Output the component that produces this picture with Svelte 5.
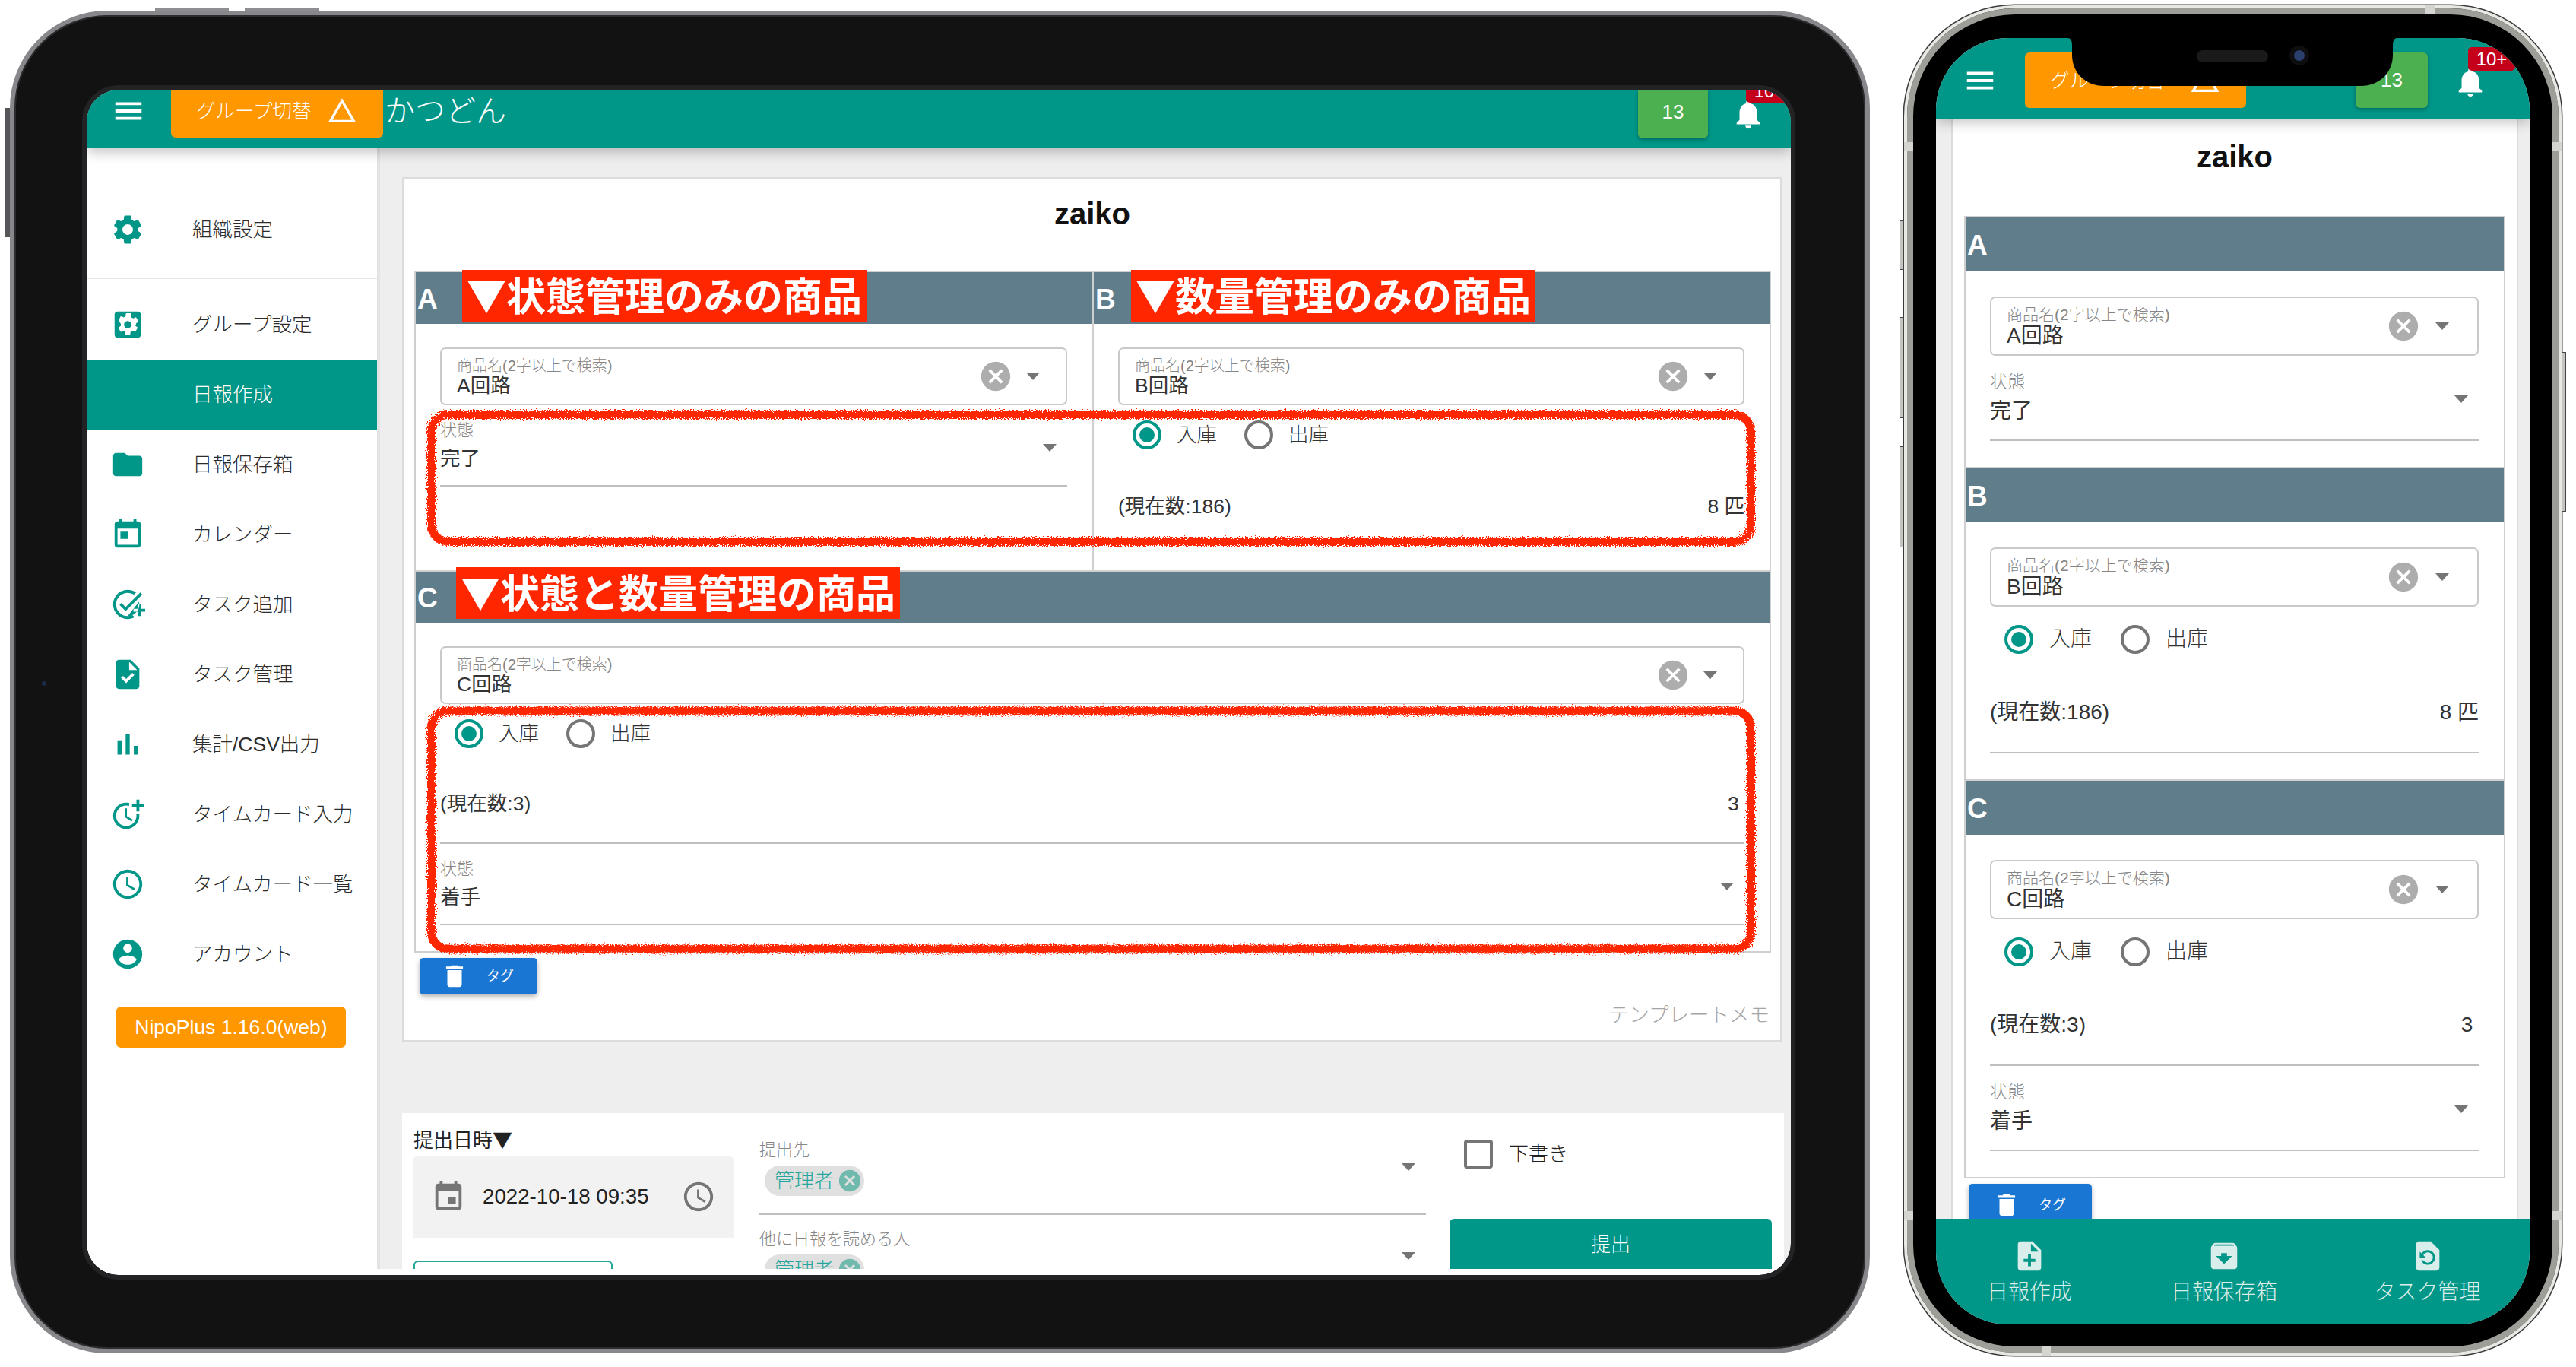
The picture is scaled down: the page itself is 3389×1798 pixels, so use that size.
<script>
  const icons = {
    menu: "M3 18h18v-2H3v2zm0-5h18v-2H3v2zm0-7v2h18V6H3z",
    warn: "M12 5.99L19.53 19H4.47L12 5.99M12 2L1 21h22L12 2z",
    bell: "M12 22c1.1 0 2-.9 2-2h-4c0 1.1.89 2 2 2zm6-6v-5c0-3.07-1.64-5.64-4.5-6.32V4c0-.83-.67-1.5-1.5-1.5s-1.5.67-1.5 1.5v.68C7.63 5.36 6 7.92 6 11v5l-2 2v1h16v-1l-2-2z",
    settings: "M19.14 12.94c.04-.3.06-.61.06-.94 0-.32-.02-.64-.07-.94l2.03-1.58c.18-.14.23-.41.12-.61l-1.92-3.32c-.12-.22-.37-.29-.59-.22l-2.39.96c-.5-.38-1.03-.7-1.62-.94l-.36-2.54c-.04-.24-.24-.41-.48-.41h-3.84c-.24 0-.43.17-.47.41l-.36 2.54c-.59.24-1.13.57-1.62.94l-2.39-.96c-.22-.08-.47 0-.59.22L2.74 8.87c-.12.21-.08.47.12.61l2.03 1.58c-.05.3-.09.63-.09.94s.02.64.07.94l-2.03 1.58c-.18.14-.23.41-.12.61l1.92 3.32c.12.22.37.29.59.22l2.39-.96c.5.38 1.03.7 1.62.94l.36 2.54c.05.24.24.41.48.41h3.84c.24 0 .44-.17.47-.41l.36-2.54c.59-.24 1.13-.56 1.62-.94l2.39.96c.22.08.47 0 .59-.22l1.92-3.32c.12-.22.07-.47-.12-.61l-2.01-1.58zM12 15.6c-1.98 0-3.6-1.62-3.6-3.6s1.62-3.6 3.6-3.6 3.6 1.62 3.6 3.6-1.62 3.6-3.6 3.6z",
    groupSettings: "M19 3H5c-1.1 0-2 .9-2 2v14c0 1.1.9 2 2 2h14c1.1 0 2-.9 2-2V5c0-1.1-.9-2-2-2zm-1.75 9c0 .23-.02.46-.05.68l1.48 1.16c.13.11.17.3.08.45l-1.4 2.42c-.09.15-.27.21-.43.15l-1.74-.7c-.36.28-.76.51-1.18.69l-.26 1.85c-.03.17-.18.3-.35.3h-2.8c-.17 0-.32-.13-.35-.3L10.5 17c-.43-.18-.82-.41-1.18-.69l-1.74.7c-.16.06-.34 0-.43-.15l-1.4-2.42c-.09-.15-.05-.34.08-.45l1.48-1.16c-.03-.22-.05-.45-.05-.68 0-.23.02-.46.05-.68L5.83 9.31c-.13-.11-.17-.3-.08-.45l1.4-2.42c.09-.15.27-.21.43-.15l1.74.7c.36-.28.76-.51 1.18-.69l.26-1.85c.03-.17.18-.3.35-.3h2.8c.17 0 .32.13.35.3L14.5 7c.43.18.82.41 1.18.69l1.74-.7c.16-.06.34 0 .43.15l1.4 2.42c.09.15.05.34-.08.45l-1.48 1.16c.03.22.05.45.05.68zM12 9.5c-1.38 0-2.5 1.12-2.5 2.5s1.12 2.5 2.5 2.5 2.5-1.12 2.5-2.5-1.12-2.5-2.5-2.5z",
    folder: "M10 4H4c-1.1 0-1.99.9-1.99 2L2 18c0 1.1.9 2 2 2h16c1.1 0 2-.9 2-2V8c0-1.1-.9-2-2-2h-8l-2-2z",
    today: "M19 3h-1V1h-2v2H8V1H6v2H5c-1.11 0-1.99.9-1.99 2L3 19c0 1.1.89 2 2 2h14c1.1 0 2-.9 2-2V5c0-1.1-.9-2-2-2zm0 16H5V8h14v11zM7 10h5v5H7z",
    event: "M17 12h-5v5h5v-5zM16 1v2H8V1H6v2H5c-1.11 0-1.99.9-1.99 2L3 19c0 1.1.89 2 2 2h14c1.1 0 2-.9 2-2V5c0-1.1-.9-2-2-2h-1V1h-2zm3 18H5V8h14v11z",
    addTask: "M22 5.18L10.59 16.6l-4.24-4.24 1.41-1.41 2.83 2.83 10-10L22 5.18zM19.79 10.22c.13.57.21 1.17.21 1.78 0 4.42-3.58 8-8 8s-8-3.58-8-8 3.58-8 8-8c1.58 0 3.04.46 4.28 1.25l1.44-1.44C16.1 2.67 14.13 2 12 2 6.48 2 2 6.48 2 12s4.48 10 10 10c1.73 0 3.36-.44 4.78-1.22l-1.5-1.5c-1 .46-2.11.72-3.28.72zM19 15h-3v2h3v3h2v-3h3v-2h-3v-3h-2v3z",
    task: "M14 2H6c-1.1 0-1.99.9-1.99 2L4 20c0 1.1.89 2 1.99 2H18c1.1 0 2-.9 2-2V8l-6-6zm-3.06 16L7.4 14.46l1.41-1.41 2.12 2.12 4.24-4.24 1.41 1.41L10.94 18zM13 9V3.5L18.5 9H13z",
    chart: "M5 9.2h3V19H5zM10.6 5h2.8v14h-2.8zm5.6 8H19v6h-2.8z",
    moreTime: "M10 8v6l4.7 2.9.8-1.2-4-2.4V8zM17.92 12c.05.33.08.66.08 1 0 3.9-3.1 7-7 7s-7-3.1-7-7 3.1-7 7-7c.7 0 1.37.1 2 .29V4.23C12.36 4.08 11.69 4 11 4c-5 0-9 4-9 9s4 9 9 9 9-4 9-9c0-.34-.02-.67-.06-1h-2.02zM20 5V2h-2v3h-3v2h3v3h2V7h3V5h-3z",
    clock: "M11.99 2C6.47 2 2 6.48 2 12s4.47 10 9.99 10C17.52 22 22 17.52 22 12S17.52 2 11.99 2zM12 20c-4.42 0-8-3.58-8-8s3.58-8 8-8 8 3.58 8 8-3.58 8-8 8zm.5-13H11v6l5.25 3.15.75-1.23-4.5-2.67z",
    account: "M12 2C6.48 2 2 6.48 2 12s4.48 10 10 10 10-4.48 10-10S17.52 2 12 2zm0 3c1.66 0 3 1.34 3 3s-1.34 3-3 3-3-1.34-3-3 1.34-3 3-3zm0 14.2c-2.5 0-4.71-1.28-6-3.22.03-1.99 4-3.08 6-3.08 1.99 0 5.97 1.09 6 3.08-1.29 1.94-3.5 3.22-6 3.22z",
    trash: "M6 19c0 1.1.9 2 2 2h8c1.1 0 2-.9 2-2V7H6v12zM19 4h-3.5l-1-1h-5l-1 1H5v2h14V4z",
    cancel: "M12 2C6.47 2 2 6.47 2 12s4.47 10 10 10 10-4.47 10-10S17.53 2 12 2zm5 13.59L15.59 17 12 13.41 8.41 17 7 15.59 10.59 12 7 8.41 8.41 7 12 10.59 15.59 7 17 8.41 13.41 12 17 15.59z",
    noteAdd: "M14 2H6c-1.1 0-1.99.9-1.99 2L4 20c0 1.1.89 2 1.99 2H18c1.1 0 2-.9 2-2V8l-6-6zm2 14h-3v3h-2v-3H8v-2h3v-3h2v3h3v2zm-3-7V3.5L18.5 9H13z",
    archive: "M20.54 5.23l-1.39-1.68C18.88 3.21 18.47 3 18 3H6c-.47 0-.88.21-1.16.55L3.46 5.23C3.17 5.57 3 6.02 3 6.5V19c0 1.1.9 2 2 2h14c1.1 0 2-.9 2-2V6.5c0-.48-.17-.93-.46-1.27zM12 17.5L6.5 12H10v-2h4v2h3.5L12 17.5zM5.12 5l.81-1h12l.94 1H5.12z",
    restore: "M14 2H6c-1.1 0-1.99.9-1.99 2L4 20c0 1.1.89 2 1.99 2H18c1.1 0 2-.9 2-2V8l-6-6zm-2 16c-2.05 0-3.81-1.24-4.58-3h1.71c.63.9 1.68 1.5 2.87 1.5 1.93 0 3.5-1.57 3.5-3.5S13.93 9.5 12 9.5c-1.35 0-2.52.78-3.1 1.9l1.6 1.6h-4V9l1.3 1.3C8.69 8.92 10.23 8 12 8c2.76 0 5 2.24 5 5s-2.24 5-5 5z"
  };

  const menuItems = [
    { icon: "folder", label: "日報保存箱" },
    { icon: "today", label: "カレンダー" },
    { icon: "addTask", label: "タスク追加" },
    { icon: "task", label: "タスク管理" },
    { icon: "chart", label: "集計/CSV出力" },
    { icon: "moreTime", label: "タイムカード入力" },
    { icon: "clock", label: "タイムカード一覧" },
    { icon: "account", label: "アカウント" }
  ];

  const bottomNav = [
    { icon: "noteAdd", label: "日報作成" },
    { icon: "archive", label: "日報保存箱" },
    { icon: "restore", label: "タスク管理" }
  ];
</script>

{#snippet icon(name, cls)}
  <svg class="icon {cls}" viewBox="0 0 24 24"><path d={icons[name]} /></svg>
{/snippet}

{#snippet topbar()}
  <header class="topbar">
    {@render icon("menu", "burger")}
    <div class="group-btn">
      <span>グループ切替</span>
      {@render icon("warn", "warn")}
    </div>
    <div class="org">かつどん</div>
    <div class="count">13</div>
    <div class="bell">
      {@render icon("bell", "bell-icon")}
      <span class="badge">10+</span>
    </div>
  </header>
{/snippet}

{#snippet arrow()}
  <i class="arrow"></i>
{/snippet}

{#snippet product(value)}
  <div class="product">
    <div class="product-text">
      <div class="label">商品名(2字以上で検索)</div>
      <div class="value">{value}</div>
    </div>
    {@render icon("cancel", "clear")}
    {@render arrow()}
  </div>
{/snippet}

{#snippet status(value)}
  <div class="status">
    <div>
      <div class="label">状態</div>
      <div class="value">{value}</div>
    </div>
    {@render arrow()}
  </div>
{/snippet}

{#snippet stock(current, amount, cls)}
  <div class="radios">
    <span class="radio on"><b></b></span><span class="radio-text">入庫</span>
    <span class="radio"></span><span class="radio-text">出庫</span>
  </div>
  <div class="qty {cls}">
    <span>(現在数:{current})</span>
    <span>{amount}</span>
  </div>
{/snippet}

{#snippet sectionHead(letter, note, cls)}
  <div class="sec-head {cls}">
    {letter}
    {#if note}<span class="note">{note}</span>{/if}
  </div>
{/snippet}

{#snippet tagBtn()}
  <div class="tag-btn">
    {@render icon("trash", "trash")}
    <span>タグ</span>
  </div>
{/snippet}

<div class="page">
  <!-- tablet -->
  <div class="tablet">
    <span class="hw top-a"></span>
    <span class="hw top-b"></span>
    <span class="hw side-a"></span>
    <span class="lens"></span>
    <div class="screen">
      {@render topbar()}
      <div class="body">
        <aside class="sidebar">
          <div class="nav first">{@render icon("settings", "nav-icon")}<span>組織設定</span></div>
          <div class="nav second">{@render icon("groupSettings", "nav-icon")}<span>グループ設定</span></div>
          <div class="nav active"><span>日報作成</span></div>
          {#each menuItems as item}
            <div class="nav">{@render icon(item.icon, "nav-icon")}<span>{item.label}</span></div>
          {/each}
          <div class="version">NipoPlus 1.16.0(web)</div>
        </aside>

        <main class="main">
          <div class="card">
            <h1 class="title">zaiko</h1>
            <div class="sections">
              <div class="row-top">
                <section class="sec">
                  {@render sectionHead("A", "▼状態管理のみの商品", "a")}
                  <div class="fields">
                    {@render product("A回路")}
                    {@render status("完了")}
                  </div>
                </section>
                <section class="sec sec-b">
                  {@render sectionHead("B", "▼数量管理のみの商品", "b")}
                  <div class="fields">
                    {@render product("B回路")}
                    {@render stock(186, "8 匹", "bare")}
                  </div>
                </section>
              </div>
              <section class="sec sec-c">
                {@render sectionHead("C", "▼状態と数量管理の商品", "c")}
                <div class="fields">
                  {@render product("C回路")}
                  {@render stock(3, "3\u00a0", "")}
                  {@render status("着手")}
                </div>
              </section>
            </div>
            {@render tagBtn()}
            <div class="memo">テンプレートメモ</div>
          </div>

          <div class="foot">
            <div class="foot-date">
              <div class="foot-title">提出日時▼</div>
              <div class="date-box">
                {@render icon("event", "date-icon")}
                <span class="date-text">2022-10-18 09:35</span>
                {@render icon("clock", "date-icon")}
              </div>
              <div class="outline-btn"></div>
            </div>
            <div class="foot-people">
              <div class="people first-people">
                <div>
                  <div class="people-label">提出先</div>
                  <span class="chip">管理者{@render icon("cancel", "chip-x")}</span>
                </div>
                {@render arrow()}
              </div>
              <div class="people">
                <div>
                  <div class="people-label">他に日報を読める人</div>
                  <span class="chip">管理者{@render icon("cancel", "chip-x")}</span>
                </div>
                {@render arrow()}
              </div>
            </div>
            <div class="foot-submit">
              <div class="draft"><i class="checkbox"></i><span>下書き</span></div>
              <div class="submit">提出</div>
            </div>
          </div>
        </main>
      </div>
      <div class="safe-strip"></div>

      <svg class="scribble" width="2242" height="1559" viewBox="0 0 2242 1559">
        <defs>
          <filter id="rough" x="-2%" y="-8%" width="104%" height="116%">
            <feTurbulence type="fractalNoise" baseFrequency="0.7" numOctaves="3" seed="4" result="n" />
            <feDisplacementMap in="SourceGraphic" in2="n" scale="10" />
          </filter>
        </defs>
        <rect x="453.5" y="427.5" width="1736" height="167" rx="22" filter="url(#rough)" />
        <rect x="453.5" y="817" width="1736" height="313" rx="22" filter="url(#rough)" />
      </svg>
    </div>
  </div>

  <!-- phone -->
  <div class="phone">
    <span class="hw p-btn p-left-a"></span>
    <span class="hw p-btn p-left-b"></span>
    <span class="hw p-btn p-left-c"></span>
    <span class="hw p-btn p-right-a"></span>
    <span class="band b1"></span>
    <span class="band b2"></span>
    <span class="band b3"></span>
    <span class="band b4"></span>
    <span class="band b5"></span>
    <span class="band b6"></span>
    <div class="screen">
      {@render topbar()}
      <div class="body">
        <main class="main">
          <div class="card">
            <h1 class="title">zaiko</h1>
            <div class="sections">
              <div class="row-top">
                <section class="sec">
                  {@render sectionHead("A", "", "")}
                  <div class="fields">
                    {@render product("A回路")}
                    {@render status("完了")}
                  </div>
                </section>
                <section class="sec sec-b">
                  {@render sectionHead("B", "", "")}
                  <div class="fields">
                    {@render product("B回路")}
                    {@render stock(186, "8 匹", "")}
                  </div>
                </section>
              </div>
              <section class="sec sec-c">
                {@render sectionHead("C", "", "")}
                <div class="fields">
                  {@render product("C回路")}
                  {@render stock(3, "3\u00a0", "")}
                  {@render status("着手")}
                </div>
              </section>
            </div>
            {@render tagBtn()}
          </div>
        </main>
      </div>
      <nav class="bottom-nav">
        {#each bottomNav as item}
          <div class="bn-item">
            {@render icon(item.icon, "bn-icon")}
            <span>{item.label}</span>
          </div>
        {/each}
      </nav>
      <svg class="notch" width="434" height="64" viewBox="0 0 434 64">
        <path d="M0 0H434Q428 0 428 9V22C428 46 410 63 386 63H48C24 63 6 46 6 22V9Q6 0 0 0Z" />
        <rect x="170" y="16" width="94" height="16" rx="8" fill="#1a1a1a" />
        <circle cx="305" cy="23" r="13" fill="#0e0e10" />
        <circle cx="305" cy="23" r="7" fill="#2a3f6b" />
      </svg>
    </div>
  </div>
</div>

<style>
  :global(body) {
    margin: 0;
    background: #fff;
    overflow: hidden;
  }

  .page {
    width: 3389px;
    height: 1798px;
    display: flex;
    align-items: flex-start;
    font-family: "Liberation Sans", "Noto Sans CJK JP", sans-serif;
    color: #333;
    font-size: 26px;
    line-height: 36px;
    background: #fff;
    overflow: hidden;
  }

  .icon {
    width: 46px;
    height: 46px;
    flex: none;
    fill: currentColor;
    display: block;
  }

  /* device frames */
  .tablet {
    position: relative;
    box-sizing: border-box;
    width: 2447px;
    height: 1766px;
    margin: 14px 0 0 13px;
    padding: 98px 0 0 95px;
    background: #121212;
    border: 6px solid #87878c;
    border-radius: 128px;
    box-shadow: inset 0 0 0 2px #2c2c2e;
  }

  .hw {
    position: absolute;
    background: #8e8e92;
  }
  .top-a {
    left: 185px;
    top: -10px;
    width: 97px;
    height: 4px;
  }
  .top-b {
    left: 303px;
    top: -10px;
    width: 98px;
    height: 4px;
  }
  .side-a {
    left: -12px;
    top: 122px;
    width: 6px;
    height: 170px;
    background: #55555a;
  }
  .lens {
    position: absolute;
    left: 36px;
    top: 876px;
    width: 6px;
    height: 6px;
    border-radius: 50%;
    background: #1c2a4a;
  }

  .phone {
    position: relative;
    box-sizing: border-box;
    width: 865px;
    height: 1776px;
    margin: 7px 0 0 45px;
    padding: 39px 0 0 38px;
    background: #000;
    border: 4px solid #e8e8e4;
    border-radius: 146px;
    box-shadow:
      0 0 0 1.5px #3a3a3a,
      inset 0 0 0 8px #9d9e98;
  }
  .p-btn {
    width: 6px;
    box-sizing: border-box;
    background: #c4c4c0;
    border: 1.5px solid #444;
  }
  .p-left-a {
    left: -10px;
    top: 279px;
    height: 65px;
  }
  .p-left-b {
    left: -10px;
    top: 406px;
    height: 133px;
  }
  .p-left-c {
    left: -10px;
    top: 576px;
    height: 133px;
  }
  .p-right-a {
    right: -10px;
    top: 452px;
    height: 210px;
  }
  .band {
    position: absolute;
    background: #d4d4d0;
  }
  .b1,
  .b2 {
    top: 176px;
    width: 12px;
    height: 12px;
  }
  .b3,
  .b4 {
    top: 1582px;
    width: 12px;
    height: 12px;
  }
  .b1,
  .b3 {
    left: -4px;
  }
  .b2,
  .b4 {
    right: -4px;
  }
  .b5,
  .b6 {
    width: 12px;
    height: 12px;
  }
  .b5 {
    left: 682px;
    top: -4px;
  }
  .b6 {
    left: 177px;
    bottom: -4px;
  }

  /* screens */
  .screen {
    position: relative;
    display: flex;
    flex-direction: column;
    background: #fff;
    overflow: hidden;
  }
  .tablet .screen {
    width: 2242px;
    height: 1559px;
    border-radius: 42px;
    outline: 6px solid #232325;
  }
  .phone .screen {
    width: 781px;
    height: 1692px;
    border-radius: 95px;
  }

  /* top bar */
  .topbar {
    position: relative;
    z-index: 2;
    flex: none;
    display: flex;
    align-items: flex-start;
    background: #009688;
    color: #fff;
    box-shadow: 0 5px 16px rgba(0, 0, 0, 0.24);
  }
  .tablet .topbar {
    height: 77px;
    padding: 0 33px 0 32px;
  }
  .phone .topbar {
    height: 106px;
    padding: 0 55px 0 35px;
  }
  .burger {
    margin-top: 5px;
  }
  .phone .burger {
    margin-top: 33px;
  }
  .group-btn {
    flex: none;
    box-sizing: border-box;
    display: flex;
    align-items: center;
    justify-content: space-between;
    background: #ff9800;
    border-radius: 0 0 6px 6px;
    font-size: 25.5px;
    font-weight: 300;
  }
  .tablet .group-btn {
    width: 279px;
    height: 63px;
    margin-left: 33px;
    padding: 0 34px 7px 33px;
  }
  .phone .group-btn {
    width: 291px;
    height: 73px;
    margin: 19px 0 0 36px;
    padding: 0 34px 0 33px;
    border-radius: 6px;
  }
  .warn {
    width: 40px;
    height: 40px;
  }
  .org {
    flex: 1;
    min-width: 0;
    margin-left: 2px;
    font-size: 40px;
    font-weight: 300;
    line-height: 48px;
    padding-top: 4px;
    white-space: nowrap;
  }
  .phone .org {
    padding-top: 22px;
  }
  .count {
    flex: none;
    width: 92px;
    height: 64px;
    border-radius: 0 0 6px 6px;
    background: #4caf50;
    text-align: center;
    line-height: 58px;
    box-shadow: 0 2px 5px rgba(0, 0, 0, 0.3);
  }
  .phone .count {
    width: 95px;
    height: 73px;
    margin-top: 19px;
    border-radius: 6px;
    line-height: 73px;
  }
  .bell {
    position: relative;
    flex: none;
    margin: 9px 0 0 30px;
    width: 46px;
  }
  .phone .bell {
    margin: 35px 0 0 33px;
  }
  .badge {
    position: absolute;
    left: 20px;
    top: -23px;
    box-sizing: border-box;
    width: 62px;
    height: 31px;
    border-radius: 5px;
    background: #c4001a;
    font-size: 24px;
    line-height: 31px;
    text-align: center;
  }

  .body {
    flex: 1;
    min-height: 0;
    display: flex;
    overflow: hidden;
    background: #eee;
  }
  .safe-strip {
    flex: none;
    height: 8px;
    background: #fff;
  }

  /* sidebar */
  .sidebar {
    flex: none;
    width: 382px;
    background: #fff;
    border-right: 4px solid #e3e3e3;
    padding-top: 61px;
  }
  .nav {
    height: 92px;
    display: flex;
    align-items: center;
    padding-left: 31px;
    color: #2c2c2c;
    font-size: 26.5px;
    font-weight: 300;
  }
  .nav span {
    margin-left: 62px;
    white-space: nowrap;
  }
  .nav-icon {
    color: #009688;
  }
  .first {
    margin-bottom: 17px;
  }
  .second {
    box-sizing: content-box;
    border-top: 2px solid #e4e4e4;
    padding-top: 14px;
  }
  .active {
    background: #009688;
    padding-left: 139px;
    color: #fff;
  }
  .active span {
    margin-left: 0;
  }
  .version {
    width: 302px;
    height: 54px;
    margin: 23px 0 0 39px;
    background: #ff9800;
    border-radius: 6px;
    color: #fff;
    font-size: 26.5px;
    line-height: 54px;
    text-align: center;
  }

  /* main column */
  .main {
    flex: 1;
    min-width: 0;
    box-sizing: border-box;
  }
  .tablet .main {
    padding: 38px 0 0 29px;
  }
  .card {
    box-sizing: border-box;
    background: #fff;
    border: 3px solid #dcdcdc;
  }
  .tablet .card {
    width: 1816px;
    height: 1138px;
    padding: 0 0 0 13px;
  }
  .phone .card {
    width: 746px;
    margin-left: 20px;
    padding: 0 15px;
    border-width: 0 2px;
    height: 1500px;
  }
  .title {
    margin: 0;
    font-size: 40px;
    font-weight: 700;
    color: #111;
    text-align: center;
    line-height: 40px;
  }
  .tablet .title {
    padding: 25px 13px 55px 0;
  }
  .phone .title {
    padding: 30px 0 58px;
  }

  .sections {
    border: 2px solid #cfcfcf;
  }
  .tablet .sections {
    width: 1781px;
  }
  .tablet .row-top {
    display: grid;
    grid-template-columns: 890px 891px;
    height: 392px;
  }
  .tablet .sec-b {
    border-left: 2px solid #cfcfcf;
  }
  .sec-c {
    border-top: 2px solid #cfcfcf;
  }
  .phone .sec-b {
    border-top: 2px solid #cfcfcf;
  }

  .sec-head {
    position: relative;
    background: #607d8b;
    color: #fff;
    font-size: 37px;
    font-weight: 700;
    display: flex;
    align-items: center;
    padding: 3px 0 0 2px;
    box-sizing: border-box;
  }
  .tablet .sec-head {
    height: 68px;
  }
  .tablet .sec-head.c {
    height: 67px;
  }
  .phone .sec-head {
    height: 71px;
  }
  .note {
    position: absolute;
    top: -3px;
    height: 68px;
    padding: 0 6px;
    background: #ff2600;
    font-family: "Noto Sans CJK JP", sans-serif;
    font-size: 52px;
    line-height: 63px;
    white-space: nowrap;
  }
  .sec-head.a .note {
    left: 61px;
  }
  .sec-head.b .note {
    left: 49px;
  }
  .sec-head.c .note {
    top: -6px;
    left: 53px;
  }

  .fields {
    padding: 0 33px 34px 32px;
    font-size: 26.5px;
  }
  .phone .fields {
    font-size: 28px;
  }

  /* product autocomplete */
  .product {
    box-sizing: border-box;
    display: flex;
    align-items: center;
    margin-top: 33px;
    height: 78px;
    padding: 0 37px 0 20px;
    border: 2px solid #c9c9c9;
    border-radius: 7px;
  }
  .tablet .product {
    margin-top: 31px;
    height: 76px;
    padding-right: 34px;
  }
  .product-text {
    flex: 1;
    min-width: 0;
  }
  .label {
    font-size: 22px;
    line-height: 24px;
    color: #868686;
    font-weight: 300;
  }
  .phone .label {
    font-size: 23px;
  }
  .product .label {
    font-size: 20px;
  }
  .phone .product .label {
    font-size: 21px;
  }
  .value {
    font-size: inherit;
    line-height: 36px;
    color: #333;
  }
  .product .value {
    line-height: 28px;
  }
  .phone .product .value {
    margin-top: 2px;
  }
  .clear {
    color: #adadad;
    margin-right: 17px;
  }
  .phone .clear {
    margin-right: 19px;
  }
  .arrow {
    display: block;
    flex: none;
    width: 0;
    height: 0;
    border-left: 9px solid transparent;
    border-right: 9px solid transparent;
    border-top: 10px solid #757575;
  }

  /* status select */
  .status {
    box-sizing: border-box;
    display: flex;
    justify-content: space-between;
    height: 112px;
    padding-top: 22px;
    border-bottom: 2px solid #c0c0c0;
  }
  .tablet .status {
    height: 107px;
    padding-top: 21px;
  }
  .status .value {
    margin-top: 9px;
  }
  .tablet .status .value {
    margin-top: 7px;
  }
  .status .arrow {
    margin: 30px 14px 0 0;
  }

  /* stock radios */
  .radios {
    box-sizing: border-box;
    display: flex;
    align-items: center;
    height: 82px;
    padding: 3px 0 0 19px;
  }
  .tablet .radios {
    height: 78px;
    padding-top: 0;
  }
  .radio {
    box-sizing: border-box;
    flex: none;
    display: flex;
    align-items: center;
    justify-content: center;
    width: 38px;
    height: 38px;
    border: 4px solid #757575;
    border-radius: 50%;
  }
  .radio.on {
    border-color: #009688;
  }
  .radio b {
    width: 20px;
    height: 20px;
    border-radius: 50%;
    background: #009688;
  }
  .radio-text {
    margin: 0 36px 0 20px;
    font-weight: 300;
  }
  .phone .radio-text {
    margin: 0 38px 0 21px;
  }
  .qty {
    box-sizing: border-box;
    display: flex;
    align-items: center;
    justify-content: space-between;
    height: 111px;
    padding-top: 4px;
    border-bottom: 2px solid #c0c0c0;
  }
  .tablet .qty {
    height: 106px;
    padding-top: 2px;
  }
  .tablet .qty.bare {
    border-bottom: 0;
    padding-top: 4px;
  }

  /* tag button + memo */
  .tag-btn {
    box-sizing: border-box;
    display: flex;
    align-items: center;
    width: 155px;
    height: 48px;
    margin: 7px 0 0 7px;
    padding-left: 27px;
    background: #1976d2;
    border-radius: 5px;
    color: #fff;
    font-size: 18px;
    box-shadow: 0 3px 6px rgba(0, 0, 0, 0.3);
  }
  .phone .tag-btn {
    width: 162px;
    height: 56px;
    margin-left: 6px;
    padding-left: 31px;
  }
  .trash {
    width: 38px;
    height: 38px;
    margin-right: 23px;
  }
  .memo {
    margin: 9px 14px 0 0;
    color: #a6a6a6;
    font-size: 26.5px;
    font-weight: 300;
    text-align: right;
  }

  /* bottom form */
  .foot {
    box-sizing: border-box;
    display: flex;
    width: 1818px;
    height: 300px;
    margin-top: 93px;
    padding-left: 15px;
    background: #fff;
  }
  .foot-date {
    flex: none;
    width: 421px;
    padding-top: 18px;
  }
  .foot-title {
    font-family: "Noto Sans CJK JP", sans-serif;
    line-height: 32px;
    color: #222;
  }
  .date-box {
    box-sizing: border-box;
    display: flex;
    align-items: center;
    justify-content: space-between;
    height: 108px;
    margin-top: 6px;
    padding: 0 23px;
    background: #f2f2f2;
    border-radius: 6px 6px 0 0;
  }
  .date-icon {
    color: #757575;
  }
  .date-text {
    flex: 1;
    margin-left: 22px;
    font-size: 27.7px;
    color: #222;
  }
  .outline-btn {
    width: 262px;
    height: 80px;
    box-sizing: border-box;
    margin-top: 30px;
    border: 2px solid #26a69a;
    border-radius: 6px;
  }
  .foot-people {
    flex: none;
    width: 877px;
    margin-left: 34px;
    padding-top: 37px;
  }
  .people {
    display: flex;
    justify-content: space-between;
  }
  .first-people {
    border-bottom: 2px solid #c0c0c0;
    padding-bottom: 23px;
    margin-bottom: 20px;
  }
  .people .arrow {
    margin: 29px 14px 0 0;
  }
  .people-label {
    font-size: 22px;
    line-height: 24px;
    color: #868686;
    font-weight: 300;
  }
  .chip {
    display: flex;
    align-items: center;
    box-sizing: border-box;
    width: 131px;
    height: 40px;
    margin: 8px 0 0 7px;
    padding-left: 13px;
    background: #e0e0e0;
    border-radius: 20px;
    color: #26a69a;
    font-weight: 300;
    white-space: nowrap;
  }
  .chip-x {
    width: 34px;
    height: 34px;
    margin-left: 4px;
    color: #6fb9ad;
  }
  .foot-submit {
    flex: none;
    width: 424px;
    margin-left: 31px;
    padding-top: 35px;
  }
  .draft {
    display: flex;
    align-items: center;
    padding-left: 19px;
    font-weight: 300;
    color: #222;
  }
  .checkbox {
    box-sizing: border-box;
    display: block;
    width: 38px;
    height: 38px;
    margin-right: 21px;
    border: 4px solid #757575;
    border-radius: 4px;
  }
  .submit {
    height: 100px;
    margin-top: 66px;
    background: #009688;
    border-radius: 6px;
    color: #fff;
    font-weight: 300;
    text-align: center;
    padding-top: 16px;
    box-sizing: border-box;
  }

  /* red hand-drawn marks sit over the form */
  .scribble {
    position: absolute;
    left: 0;
    top: 0;
    z-index: 3;
    pointer-events: none;
  }
  .scribble rect {
    fill: none;
    stroke: #ff2600;
    stroke-width: 11;
  }

  /* phone bottom nav */
  .bottom-nav {
    flex: none;
    height: 139px;
    display: grid;
    grid-template-columns: 246px 266px 269px;
    background: #009688;
    color: #d9eeea;
    position: relative;
    z-index: 2;
  }
  .bn-item {
    display: flex;
    flex-direction: column;
    align-items: center;
    padding-top: 26px;
    font-size: 28px;
    font-weight: 300;
    line-height: 32px;
  }
  .bn-icon {
    margin-bottom: 9px;
  }
  .notch {
    position: absolute;
    left: 173px;
    top: 0;
    z-index: 4;
  }
</style>
